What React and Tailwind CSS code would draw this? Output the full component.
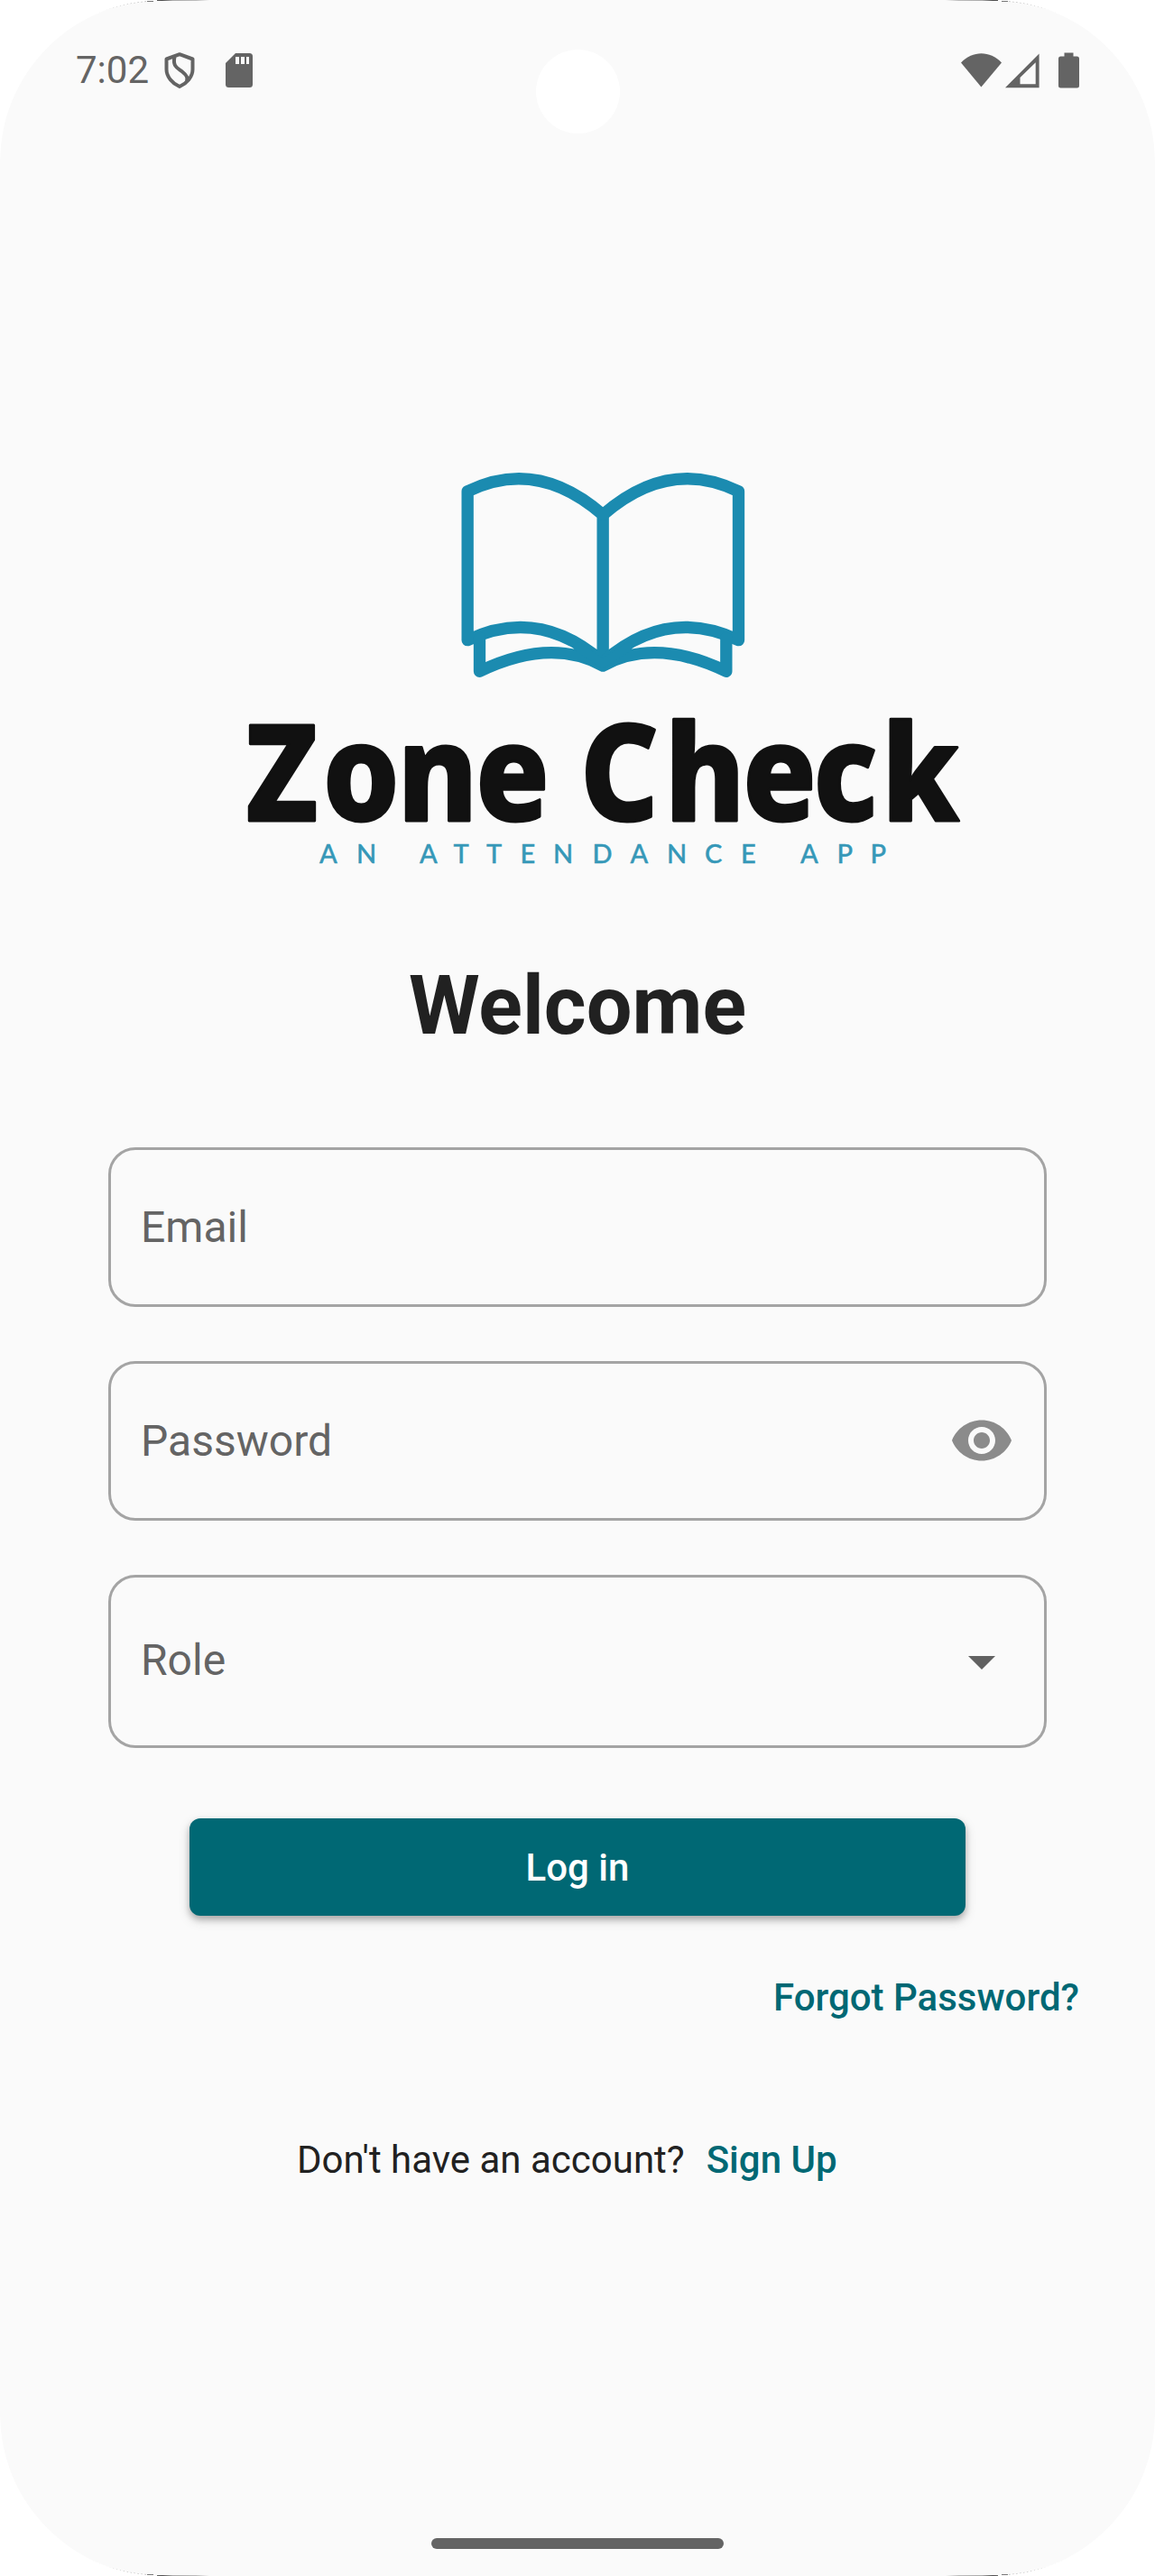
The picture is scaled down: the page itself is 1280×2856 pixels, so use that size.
import React from "react";

function StatusBar() {
  return (
    <header className="flex h-[156px] items-center justify-between pr-[83px] pl-[84px] text-[#646464]">
      <div className="flex items-center">
        <span className="w-[98px] whitespace-nowrap text-[42px] leading-[48px]">7:02</span>
        <svg width="34" height="40" viewBox="0 0 34 40" fill="none" stroke="currentColor" strokeWidth="4" strokeLinejoin="round">
          <path d="M17 2.200 31.500 7.500V19C31.500 27 25 34.500 17 38 9 34.500 2.500 27 2.500 19V7.500Z" />
          <path d="M11.500 5C9 16 15 17.500 20 21.500 25.500 26 26 28 25 32" />
        </svg>
        <svg className="ml-[34px]" width="30" height="38" viewBox="0 0 30 38">
          <path fill="currentColor" d="M11 0H26.500Q30 0 30 3.500V34.500Q30 38 26.500 38H3.500Q0 38 0 34.500V11Z" />
          <path fill="#fafafa" d="M11 4h4v8h-4zM17 4h4v8h-4zM23 4h3v8h-3z" />
        </svg>
      </div>
      <svg width="132" height="40" viewBox="0 0 132 40" fill="currentColor">
        <path d="M0 11.500C13 -2.200 32 -2.200 45 11.500L22.400 38.500Z" />
        <path fillRule="evenodd" d="M49 39.200 86.600 1.500V39.200ZM65.500 35.300H82.700V11.300L65.500 28Z" />
        <path d="M114.500 0.500H124.500V4.500H128.500Q131 4.500 131 7V37Q131 39.500 128.500 39.500H110.500Q108 39.500 108 37V7Q108 4.500 110.500 4.500H114.500Z" />
      </svg>
    </header>
  );
}

function Logo() {
  return (
    <svg className="ml-[250px] block" width="830" height="480" viewBox="0 0 830 480">
      <g transform="translate(230.500 .7) scale(.33333)" fill="none" stroke="#1b8bb0" strokeWidth="40" strokeLinecap="round" strokeLinejoin="round">
        <path d="M563 700V210C420 85 270 55 113 132V627C270 552 420 575 563 700" />
        <path d="M563 210C706 85 856 55 1014 132V627C856 552 706 575 563 700" />
        <path d="M153 620V731C300 660 440 645 563 712C686 645 826 660 973 731V620" />
        <path d="M480 650 563 705 646 650" strokeWidth="30" />
      </g>
      <g fill="#111" stroke="#111" strokeWidth="3" strokeLinejoin="round" fontFamily="'Noto Sans', 'Open Sans', sans-serif" fontWeight="800" fontSize="149">
        <text transform="translate(0 410) scale(.9 1)" x="25 120 212 308 400 437 541 637 724 808">Zone Check</text>
      </g>
      <text
        y="457"
        x="104 145 190 215 252.500 289 326.500 363 406.500 448.500 489 531 571 610 637 677.500 714.500"
        fill="#3698b8"
        stroke="#3698b8"
        strokeWidth=".4"
        fontFamily="Lato, sans-serif"
        fontSize="29"
        fontWeight="500"
      >
        AN ATTENDANCE APP
      </text>
    </svg>
  );
}

function Field({ label, tall, children }) {
  return (
    <div className={`flex items-center justify-between rounded-[30px] border-[3px] border-[#a4a4a4] px-[33px] text-[#646464] ${tall ? "h-[192px]" : "h-[177px]"}`}>
      <span className={`text-[48px] leading-[56px] ${tall ? "mb-[2px]" : ""}`}>{label}</span>
      {children}
    </div>
  );
}

function Corners() {
  return (
    <svg className="pointer-events-none absolute inset-0" width="1280" height="2856" viewBox="0 0 1280 2856" fill="none">
      <defs>
        <linearGradient id="edge">
          <stop offset="0" stopColor="#222" />
          <stop offset=".3" stopColor="#aaa" />
          <stop offset=".75" stopColor="#bbb" />
          <stop offset="1" stopColor="#fafafa" />
        </linearGradient>
        <g id="corner">
          <rect x="174" width="58" height="1" fill="url(#edge)" />
          <path d="M78 29.500Q116 5 163 1.500" stroke="#888" strokeWidth=".8" strokeDasharray="1 3" />
          <path d="M163 1.500h7" stroke="#777" />
        </g>
      </defs>
      <use href="#corner" />
      <use href="#corner" transform="matrix(-1 0 0 1 1280 0)" />
      <use href="#corner" transform="matrix(1 0 0 -1 0 2856)" />
      <use href="#corner" transform="matrix(-1 0 0 -1 1280 2856)" />
    </svg>
  );
}

export default function App() {
  return (
    <div className="w-[1280px] bg-white font-['Roboto',sans-serif]">
      <div className="relative flex h-[2856px] flex-col overflow-hidden rounded-[180px] bg-[#fafafa]">
        <div className="absolute top-[55px] left-[594px] size-[93px] rounded-full bg-white" />
        <StatusBar />
        <main className="flex flex-1 flex-col pt-[344px]">
          <Logo />
          <h1 className="mt-[83px] text-center text-[90px] leading-[106px] font-bold text-[#212121]">Welcome</h1>
          <form className="mt-[103px] flex flex-col gap-[60px] px-[120px]">
            <Field label="Email" />
            <Field label="Password">
              <svg className="mb-[2px]" width="72" height="72" viewBox="0 0 24 24" fill="#8b8b8b">
                <path d="M12 4.500C7 4.500 2.730 7.610 1 12c1.730 4.390 6 7.500 11 7.500s9.270-3.110 11-7.500c-1.730-4.390-6-7.500-11-7.500zM12 17c-2.760 0-5-2.240-5-5s2.240-5 5-5 5 2.240 5 5-2.240 5-5 5zm0-8c-1.660 0-3 1.340-3 3s1.340 3 3 3 3-1.340 3-3-1.340-3-3-3z" />
              </svg>
            </Field>
            <Field label="Role" tall>
              <svg width="72" height="72" viewBox="0 0 24 24" fill="#616161">
                <path d="M7 10l5 5 5-5z" />
              </svg>
            </Field>
          </form>
          <button className="mt-[78px] h-[108px] w-[860px] self-center rounded-[12px] bg-[#006874] pt-[2px] text-[42px] leading-[48px] font-medium text-white shadow-[0_4px_7px_rgba(0,0,0,0.24),0_5px_14px_rgba(0,0,0,0.14)]">
            Log in
          </button>
          <a className="mt-[67px] mr-[84px] self-end text-[42px] leading-[48px] font-medium text-[#006874]">Forgot Password?</a>
          <div className="mt-[132px] ml-[329px] flex gap-[24px] text-[42px] leading-[48px]">
            <span className="text-[#212121]">Don't have an account?</span>
            <a className="font-medium text-[#006874]">Sign Up</a>
          </div>
        </main>
        <div className="mb-[30px] h-[12px] w-[324px] self-center rounded-full bg-[#646464]" />
        <Corners />
      </div>
    </div>
  );
}
